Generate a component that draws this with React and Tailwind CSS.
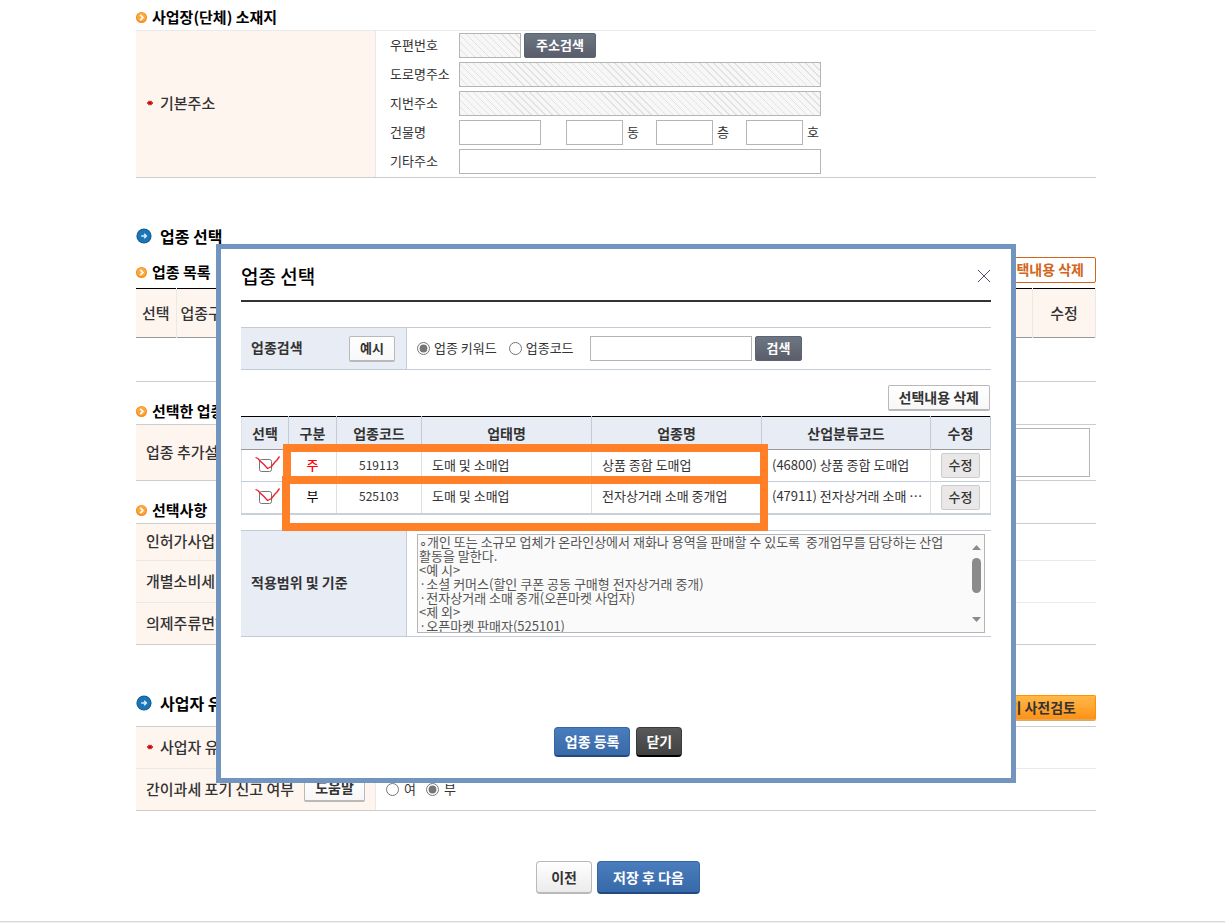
import React, { useState } from 'react';
import clsx from 'clsx';

const industries = [
    { id: 1, type: '주', code: '519113', category: '도매 및 소매업', name: '상품 종합 도매업', standard: '(46800) 상품 종합 도매업' },
    { id: 2, type: '부', code: '525103', category: '도매 및 소매업', name: '전자상거래 소매 중개업', standard: '(47911) 전자상거래 소매 …' },
];

const scopeText = `∘개인 또는 소규모 업체가 온라인상에서 재화나 용역을 판매할 수 있도록  중개업무를 담당하는 산업
활동을 말한다.
<예 시>
·소셜 커머스(할인 쿠폰 공동 구매형 전자상거래 중개)
·전자상거래 소매 중개(오픈마켓 사업자)
<제 외>
·오픈마켓 판매자(525101)`;

const inputClass = 'h-[25px] border border-[#b5b5b5] bg-white px-1';
const hatchedClass =
    'h-[25px] border border-[#b5b5b5] px-1 bg-[repeating-linear-gradient(45deg,#e2e2e2_0px,#e2e2e2_1px,#f7f7f7_1px,#f7f7f7_5px)]';
const darkButton =
    'h-[25px] rounded-xs border border-[#5b6470] bg-linear-to-b from-[#6c7782] to-[#5b5d6b] px-[11px] pb-[2px] text-[13px] leading-none font-bold text-white';
const whiteButton =
    'h-[26px] rounded-xs border border-[#b9b9b9] border-b-2 bg-linear-to-b from-white to-[#f7f7f7] px-[10px] pb-[2px] leading-none font-bold text-[#333]';
const blueButton =
    'rounded-sm border border-[#3566a5] border-b-2 border-b-[#234a80] bg-linear-to-b from-[#4a7dbd] to-[#3869a8] leading-none font-bold text-white';

const OrangeBullet = () => (
    <svg width="11" height="11" viewBox="0 0 11 11" aria-hidden="true">
        <circle cx="5.5" cy="5.5" r="5.5" fill="#f58a1f" />
        <circle cx="5.5" cy="5" r="4.5" fill="#fca83c" />
        <path d="M4.2 2.8 L6.9 5.5 L4.2 8.2" fill="none" stroke="#fff" strokeWidth="1.7" />
    </svg>
);

const BlueBullet = () => (
    <svg width="16" height="16" viewBox="0 0 16 16" aria-hidden="true">
        <circle cx="8" cy="8" r="7.6" fill="#14609b" />
        <circle cx="8" cy="8" r="6.4" fill="#1c76b6" />
        <path d="M5.2 8 H10.3 M8.2 5.8 L10.4 8 L8.2 10.2" fill="none" stroke="#d9ecf8" strokeWidth="1.4" />
    </svg>
);

const RequiredMark = () => (
    <svg className="mr-[7px] ml-px" width="6" height="6" viewBox="0 0 6 6" aria-hidden="true">
        <path d="M0 3 H6 M1.6 0.8 L4.4 5.2 M4.4 0.8 L1.6 5.2" stroke="#d00000" strokeWidth="1.3" />
    </svg>
);

const SubHeading = ({ children }) => (
    <h3 className="flex h-[30px] items-center gap-[5px] pt-1 text-[15px] leading-5 font-bold text-black">
        <OrangeBullet />
        {children}
    </h3>
);

const SectionHeading = ({ children }) => (
    <h2 className="flex h-6 items-center gap-2 pb-px text-base leading-6 font-bold text-black">
        <BlueBullet />
        {children}
    </h2>
);

const FormRow = ({ label, required, className, children }) => (
    <div className={clsx('flex', className)}>
        <div className="flex w-[240px] shrink-0 items-center border-r border-[#e9e9e9] bg-[#fff5ef] pb-[2px] pl-[10px] text-[15px] leading-5 font-medium">
            {required && <RequiredMark />}
            {label}
        </div>
        <div className="flex grow items-center pl-[10px]">{children}</div>
    </div>
);

const FieldLabel = ({ htmlFor, children }) => (
    <label htmlFor={htmlFor} className="pb-[2px]">{children}</label>
);

const AddressSection = () => (
    <section>
        <SubHeading>사업장(단체) 소재지</SubHeading>
        <div className="border-t border-b border-t-[#e9e9e9] border-b-[#ccc]">
            <FormRow label="기본주소" required>
                <div className="grid grid-cols-[69px_auto] items-center gap-y-1 py-[2px] pb-[3px] pl-1 text-[13px] leading-4">
                    <FieldLabel htmlFor="zip">우편번호</FieldLabel>
                    <div className="flex gap-[3px]">
                        <input id="zip" readOnly className={clsx(hatchedClass, 'w-[62px]')} />
                        <button type="button" className={darkButton}>주소검색</button>
                    </div>
                    <FieldLabel htmlFor="road">도로명주소</FieldLabel>
                    <input id="road" readOnly className={clsx(hatchedClass, 'w-[362px]')} />
                    <FieldLabel htmlFor="lot">지번주소</FieldLabel>
                    <input id="lot" readOnly className={clsx(hatchedClass, 'w-[362px]')} />
                    <FieldLabel htmlFor="building">건물명</FieldLabel>
                    <div className="flex items-center">
                        <input id="building" className={clsx(inputClass, 'mr-[25px] w-[82px]')} />
                        {['동', '층', '호'].map((unit) => (
                            <label key={unit} className="flex w-[90px] items-center gap-1">
                                <input className={clsx(inputClass, 'w-[57px]')} />
                                <span className="pb-[2px]">{unit}</span>
                            </label>
                        ))}
                    </div>
                    <FieldLabel htmlFor="etc">기타주소</FieldLabel>
                    <input id="etc" className={clsx(inputClass, 'w-[362px]')} />
                </div>
            </FormRow>
        </div>
    </section>
);

const IndustryList = () => (
    <section>
        <div className="mt-[7px] flex items-center justify-between pb-[3px]">
            <SubHeading>업종 목록</SubHeading>
            <button type="button" className="h-[26px] rounded-xs border border-[#d2651a] bg-white px-[11px] pb-[2px] text-[14px] leading-none font-bold text-[#d2651a]">
                선택내용 삭제
            </button>
        </div>
        <table className="w-full table-fixed border-collapse border-t border-b border-t-black border-b-[#ccc] text-[15px] leading-5">
            <thead>
                <tr className="h-[49px] border-b border-[#999] bg-[#fff5ef]">
                    <th className="w-[40px] border-r border-[#e9e9e9] font-medium">선택</th>
                    <th className="w-[64px] border-r border-[#e9e9e9] font-medium">업종구분</th>
                    <th className="border-r border-[#e9e9e9]"></th>
                    <th className="w-[70px] border-r border-[#e9e9e9] font-medium">종류</th>
                    <th className="w-[63px] border-r border-[#e9e9e9] font-medium">수정</th>
                </tr>
            </thead>
            <tbody>
                <tr className="h-[44px]">
                    <td colSpan={5}></td>
                </tr>
            </tbody>
        </table>
    </section>
);

const IndustryRow = ({ item, checked, onToggle }) => (
    <tr className="h-[32px] border-b border-[#c3ccd6]">
        <td className="border-r border-[#e0e0e0]">
            <span className="relative mx-auto block h-[13px] w-[13px]">
                <input
                    type="checkbox"
                    aria-label={item.name}
                    checked={false}
                    onChange={onToggle}
                    className="block h-[13px] w-[13px]"
                />
                {checked && (
                    <svg className="pointer-events-none absolute -top-[3px] -left-1" width="26" height="14" viewBox="0 0 26 14" aria-hidden="true">
                        <path
                            d="M0.5 1.5 L3 2.5 L5 5 L9 8.5 L12.5 12.5 L16.5 10.5 L20 6 L22 4 L24.5 0.5"
                            fill="none"
                            stroke="#ed1c24"
                            strokeWidth="1.3"
                        />
                    </svg>
                )}
            </span>
        </td>
        <td className={clsx('border-r border-[#e0e0e0] pb-[2px] text-center', item.type === '주' ? 'font-medium text-[#f00]' : 'text-black')}>
            {item.type}
        </td>
        <td className="border-r border-[#e0e0e0] pb-[2px] text-center text-[12px]">{item.code}</td>
        <td className="border-r border-[#e0e0e0] pb-[2px] pl-[10px]">{item.category}</td>
        <td className="border-r border-[#e0e0e0] pb-[2px] pl-[10px]">{item.name}</td>
        <td className="border-r border-[#e0e0e0] pb-[2px] pl-[10px] whitespace-nowrap">{item.standard}</td>
        <td className="border-r border-[#e0e0e0] text-center">
            <button type="button" className="mx-auto block h-[25px] rounded-xs border border-[#ccc] bg-[#e9e7e8] px-[7px] pb-[2px] text-[13px] leading-none font-medium">
                수정
            </button>
        </td>
    </tr>
);

const IndustryModal = () => {
    const [searchType, setSearchType] = useState('keyword');
    const [selected, setSelected] = useState([1, 2]);

    const toggle = (id) => {
        setSelected((prev) => (prev.includes(id) ? prev.filter((v) => v !== id) : [...prev, id]));
    };

    return (
        <div className="absolute inset-x-0 top-[244px] flex justify-center pl-[7px]">
            <div role="dialog" aria-label="업종 선택" className="w-full max-w-[800px] border-[5px] border-[#7295c0] bg-white px-5 pb-[21px]">
                <div className="flex h-[53px] items-center justify-between border-b-2 border-[#333] pt-[3px]">
                    <h2 className="text-[19px] leading-6 font-medium text-black">업종 선택</h2>
                    <button type="button" aria-label="닫기">
                        <svg width="14" height="14" viewBox="0 0 14 14" aria-hidden="true">
                            <path d="M1 1 L13 13 M13 1 L1 13" stroke="#4f5180" strokeWidth="1" />
                        </svg>
                    </button>
                </div>

                {/* search */}
                <div className="mt-[25px] flex border-t border-b border-[#c3ccd6] text-[13px] leading-4">
                    <div className="flex h-[41px] w-[166px] items-center justify-between border-r border-[#c3ccd6] bg-[#e8ecf5] pr-[11px] pl-[10px] text-[14px] font-bold">
                        <span className="pb-1">업종검색</span>
                        <button type="button" className={clsx(whiteButton, 'text-[13px]')}>예시</button>
                    </div>
                    <div className="flex items-center pl-[10px]">
                        <label className="mr-[12px] flex items-center gap-1">
                            <input
                                type="radio"
                                name="searchType"
                                className="h-[13px] w-[13px] accent-[#767676]"
                                checked={searchType === 'keyword'}
                                onChange={() => setSearchType('keyword')}
                            />
                            <span className="pb-[2px]">업종 키워드</span>
                        </label>
                        <label className="mr-4 flex items-center gap-1">
                            <input
                                type="radio"
                                name="searchType"
                                className="h-[13px] w-[13px] accent-[#767676]"
                                checked={searchType === 'code'}
                                onChange={() => setSearchType('code')}
                            />
                            <span className="pb-[2px]">업종코드</span>
                        </label>
                        <input aria-label="업종검색" className={clsx(inputClass, 'mr-[3px] w-[162px]')} />
                        <button type="button" className={darkButton}>검색</button>
                    </div>
                </div>

                <div className="mt-[15px] mb-[5px] flex justify-end pr-px">
                    <button type="button" className={clsx(whiteButton, 'text-[14px]')}>선택내용 삭제</button>
                </div>

                {/* list */}
                <div className="relative">
                    <table className="w-full table-fixed border-collapse border-t border-b-2 border-l border-t-black border-b-[#c9d0d8] border-l-[#dde2e8] text-[13px] leading-4">
                        <thead>
                            <tr className="h-[33px] border-b border-[#999] bg-[#e8ecf5] text-[14px]">
                                <th className="w-[47px] border-r border-[#c3ccd6] pb-px">선택</th>
                                <th className="w-[48px] border-r border-[#c3ccd6] pb-px">구분</th>
                                <th className="w-[85px] border-r border-[#c3ccd6] pb-px">업종코드</th>
                                <th className="w-[170px] border-r border-[#c3ccd6] pb-px">업태명</th>
                                <th className="w-[170px] border-r border-[#c3ccd6] pb-px">업종명</th>
                                <th className="border-r border-[#c3ccd6] pb-px">산업분류코드</th>
                                <th className="w-[60px] border-r border-[#c3ccd6] pb-px">수정</th>
                            </tr>
                        </thead>
                        <tbody>
                            {industries.map((item) => (
                                <IndustryRow
                                    key={item.id}
                                    item={item}
                                    checked={selected.includes(item.id)}
                                    onToggle={() => toggle(item.id)}
                                />
                            ))}
                        </tbody>
                    </table>
                    {/* highlight frames */}
                    <div className="pointer-events-none absolute top-[28px] left-[42px] h-[40px] w-[485px] border-8 border-[#ff8027]"></div>
                    <div className="pointer-events-none absolute top-[60px] left-[41px] h-[55px] w-[486px] border-8 border-[#ff8027]"></div>
                </div>

                {/* scope */}
                <div className="mt-[15px] flex border-t border-b border-[#c3ccd6]">
                    <label htmlFor="scope" className="flex w-[166px] shrink-0 items-center border-r border-[#c3ccd6] bg-[#e8ecf5] pb-[2px] pl-[10px] text-[14px] leading-5 font-bold">
                        적용범위 및 기준
                    </label>
                    <div className="relative my-[3px] mr-[6px] ml-[10px] grow">
                        <textarea
                            id="scope"
                            readOnly
                            value={scopeText}
                            className="block h-[99px] w-full resize-none overflow-hidden border border-[#b5b5b5] bg-[#fafafa] pl-px text-[13px] leading-[14px] text-[#555]"
                        />
                        <svg className="absolute top-2 right-[3px]" width="11" height="84" viewBox="0 0 11 84" aria-hidden="true">
                            <path d="M1 8 L5.5 3 L10 8 Z M1 75 L5.5 80 L10 75 Z" fill="#8b8b8b" />
                            <rect x="1" y="16" width="9" height="35" rx="4.5" fill="#8b8b8b" />
                        </svg>
                    </div>
                </div>

                <div className="mt-[90px] flex justify-center gap-[6px] pl-1">
                    <button type="button" className={clsx(blueButton, 'h-[30px] px-[10px] pb-px text-[14px]')}>업종 등록</button>
                    <button type="button" className="h-[30px] rounded-sm border border-b-2 border-[#3a3a3a] border-b-black bg-linear-to-b from-[#595959] to-[#424242] px-[9px] pb-px text-[14px] leading-none font-bold text-white">
                        닫기
                    </button>
                </div>
            </div>
        </div>
    );
};

const App = () => {
    const [giveUp, setGiveUp] = useState('no');

    return (
        <div className="relative bg-white font-['Noto_Sans_CJK_KR',sans-serif] text-[#333]">
            <div className="pl-[7px]">
                <main className="mx-auto w-full max-w-[960px]">
                    <AddressSection />

                    <div className="mt-[46px]">
                        <SectionHeading>업종 선택</SectionHeading>
                    </div>
                    <IndustryList />

                    <section className="mt-3">
                        <SubHeading>선택한 업종</SubHeading>
                        <div className="border-t border-b border-[#ccc]">
                            <FormRow label="업종 추가설명" className="h-[55px]">
                                <textarea aria-label="업종 추가설명" className="mr-[6px] h-[49px] grow resize-none border border-[#b5b5b5]" />
                            </FormRow>
                        </div>
                    </section>

                    <section className="mt-3">
                        <SubHeading>선택사항</SubHeading>
                        <div className="divide-y divide-[#e9e9e9] border-t border-b border-[#ccc]">
                            <FormRow label="인허가사업" className="h-[37px]" />
                            <FormRow label="개별소비세" className="h-[42px]" />
                            <FormRow label="의제주류면허" className="h-[41px]" />
                        </div>
                    </section>

                    <section className="mt-[46px]">
                        <div className="flex h-[35px] items-start justify-between">
                            <SectionHeading>사업자 유형</SectionHeading>
                            <button type="button" className="mt-1 h-[26px] rounded-xs border border-b-2 border-[#ff9000] border-b-[#e0a860] bg-linear-to-b from-[#ffb848] to-[#ff9110] px-[19px] pb-[2px] text-[14px] leading-none font-bold text-[#333]">
                                포기 사전검토
                            </button>
                        </div>
                        <div className="divide-y divide-[#e9e9e9] border-t border-b border-[#ccc]">
                            <FormRow label="사업자 유형" required className="h-[42px]" />
                            <FormRow
                                label={
                                    <>
                                        간이과세 포기 신고 여부
                                        <button type="button" className={clsx(whiteButton, 'ml-[10px] text-[14px]')}>도움말</button>
                                    </>
                                }
                                className="h-[41px]"
                            >
                                <label className="mr-[10px] flex items-center gap-[5px] text-[13px] leading-4">
                                    <input
                                        type="radio"
                                        name="giveUp"
                                        className="h-[13px] w-[13px] accent-[#767676]"
                                        checked={giveUp === 'yes'}
                                        onChange={() => setGiveUp('yes')}
                                    />
                                    <span className="pb-[2px]">여</span>
                                </label>
                                <label className="flex items-center gap-[5px] text-[13px] leading-4">
                                    <input
                                        type="radio"
                                        name="giveUp"
                                        className="h-[13px] w-[13px] accent-[#767676]"
                                        checked={giveUp === 'no'}
                                        onChange={() => setGiveUp('no')}
                                    />
                                    <span className="pb-[2px]">부</span>
                                </label>
                            </FormRow>
                        </div>
                    </section>

                    <div className="mt-[50px] flex justify-center gap-[5px] pl-1">
                        <button type="button" className="h-[33px] rounded-sm border border-b-2 border-[#b9b9b9] bg-linear-to-b from-white to-[#ebebeb] px-[14px] pb-px text-[14px] leading-none font-bold">
                            이전
                        </button>
                        <button type="button" className={clsx(blueButton, 'h-[33px] px-[15px] pb-px text-[14px]')}>저장 후 다음</button>
                    </div>
                </main>
            </div>
            <footer className="mt-[27px] border-t border-[#d9d9d9] bg-[#f0f0f0] pt-px"></footer>

            <IndustryModal />
        </div>
    );
};

export default App;
